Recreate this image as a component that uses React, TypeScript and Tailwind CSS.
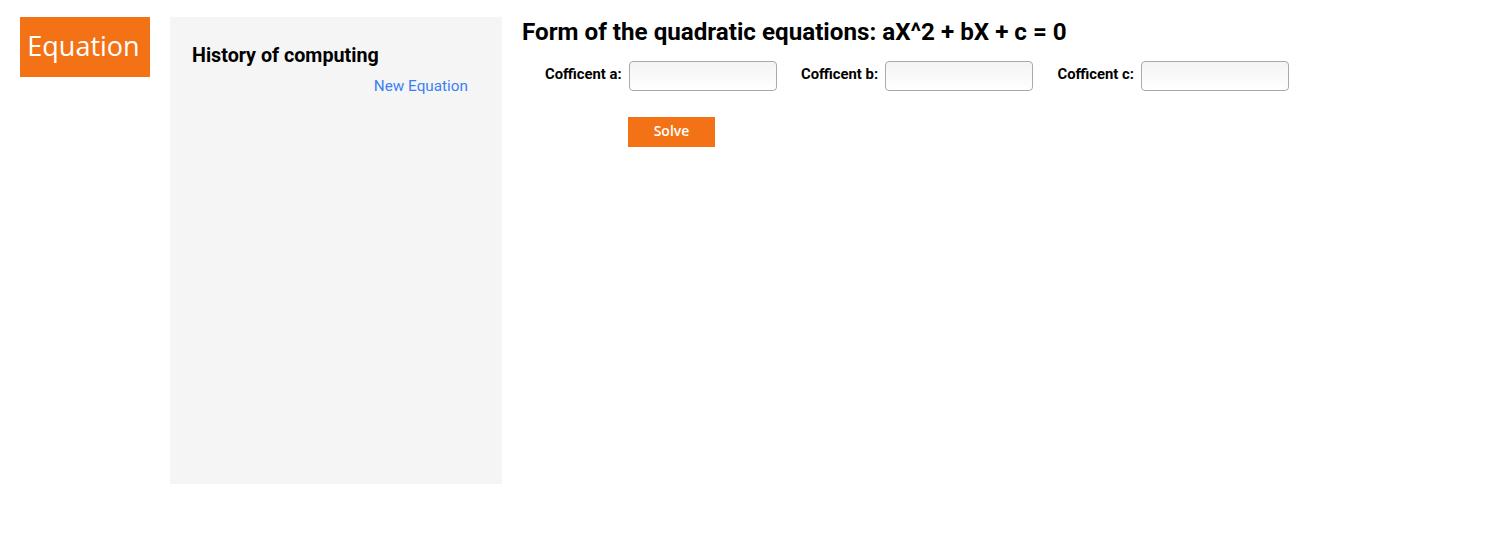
import React from 'react';

const inputClass =
  "w-[148px] h-[30px] rounded-[4px] border border-[#a9a9a9] bg-gradient-to-b from-[#f4f4f4] to-white outline-none px-2 text-sm";

const Coefficient: React.FC<{ name: string }> = ({ name }) => (
  <div className="flex items-center gap-[7px]">
    <label className="text-[14.8px] font-bold text-black pb-[4px]">Cofficent {name}:</label>
    <input className={inputClass} />
  </div>
);

export default function App() {
  return (
    <div className="flex items-start gap-5 pl-5 pt-[17px] bg-white min-h-[536px] font-['Roboto',sans-serif]">
      {/* logo */}
      <div className="w-[130px] h-[60px] bg-[#f47216] flex items-center justify-center">
        <span className="text-white text-[27px] font-['Open_Sans',sans-serif] leading-none pb-1 pr-[3px]">
          Equation
        </span>
      </div>

      {/* history sidebar */}
      <div className="w-[332px] h-[467px] bg-[#f5f5f5] px-[22px] pt-[28px]">
        <h2 className="text-[19.7px] font-bold text-black leading-[22px]">History of computing</h2>
        <div className="flex justify-end pr-[12px] mt-[8px]">
          <a className="text-[15.3px] text-[#3b7ff5] cursor-pointer">New Equation</a>
        </div>
      </div>

      {/* solver */}
      <div className="flex flex-col">
        <h1 className="text-[24.2px] font-bold text-black leading-[28px] mt-[1px]">
          Form of the quadratic equations: aX^2 + bX + c = 0
        </h1>
        <div className="flex items-center gap-[24.5px] pl-[23px] mt-[15px]">
          <Coefficient name="a" />
          <Coefficient name="b" />
          <Coefficient name="c" />
        </div>
        <div className="pl-[106px] mt-[26px]">
          <button className="w-[87px] h-[30px] bg-[#f47216] text-white text-[14px] font-semibold font-['Open_Sans',sans-serif] pb-[3px]">
            Solve
          </button>
        </div>
      </div>
    </div>
  );
}
